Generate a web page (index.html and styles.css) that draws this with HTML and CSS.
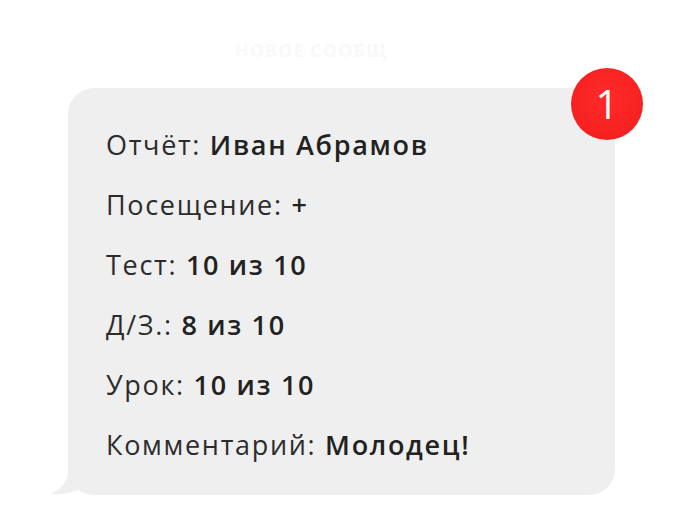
FILE: index.html
```html
<!DOCTYPE html>
<html lang="ru">
<head>
<meta charset="utf-8">
<link rel="stylesheet" href="styles.css">
</head>
<body>
<div class="page">
  <div class="ghost">НОВОЕ СООБЩ</div>
  <div class="bubble">
    <svg class="tail" width="30" height="28" viewBox="0 0 30 28"><path d="M18 0 C18 12 12 21 0 27 C10 28 20 26 30 22 L30 0 Z" fill="#efefef"/></svg>
    <div class="row">Отчёт: <b>Иван Абрамов</b></div>
    <div class="row">Посещение: <b>+</b></div>
    <div class="row">Тест: <b>10 из 10</b></div>
    <div class="row">Д/З.: <b>8 из 10</b></div>
    <div class="row">Урок: <b>10 из 10</b></div>
    <div class="row">Комментарий: <b>Молодец!</b></div>
    <div class="badge">1</div>
  </div>
</div>
</body>
</html>
```
FILE: styles.css
```css
html, body { margin: 0; padding: 0; background: #fff; }
.page {
  width: 695px;
  height: 521px;
  box-sizing: border-box;
  padding: 40px 0 0 68px;
  font-family: "Open Sans", "Noto Sans", sans-serif;
}
.ghost {
  height: 48px;
  margin-left: 167px;
  font-size: 18px;
  font-weight: 700;
  letter-spacing: 1px;
  color: #f9f9f9;
  line-height: 20px;
}
.bubble {
  position: relative;
  width: 547px;
  height: 407px;
  box-sizing: border-box;
  background: #efefef;
  border-radius: 26px;
  padding: 27px 0 0 38px;
}
.row {
  height: 60px;
  line-height: 60px;
  font-size: 27px;
  letter-spacing: 1.68px;
  color: #2c2c2c;
  white-space: nowrap;
}
.row b { font-weight: 600; color: #222; }
.tail {
  position: absolute;
  left: -17px;
  bottom: 0;
}
.badge {
  position: absolute;
  left: 503px;
  top: -20px;
  width: 72px;
  height: 72px;
  border-radius: 50%;
  background: radial-gradient(circle at 50% 40%, #ff2a2a 0%, #f21c1c 100%);
  color: #fff;
  font-size: 40px;
  font-weight: 500;
  line-height: 72px;
  text-align: center;
  letter-spacing: 0;
}
```
